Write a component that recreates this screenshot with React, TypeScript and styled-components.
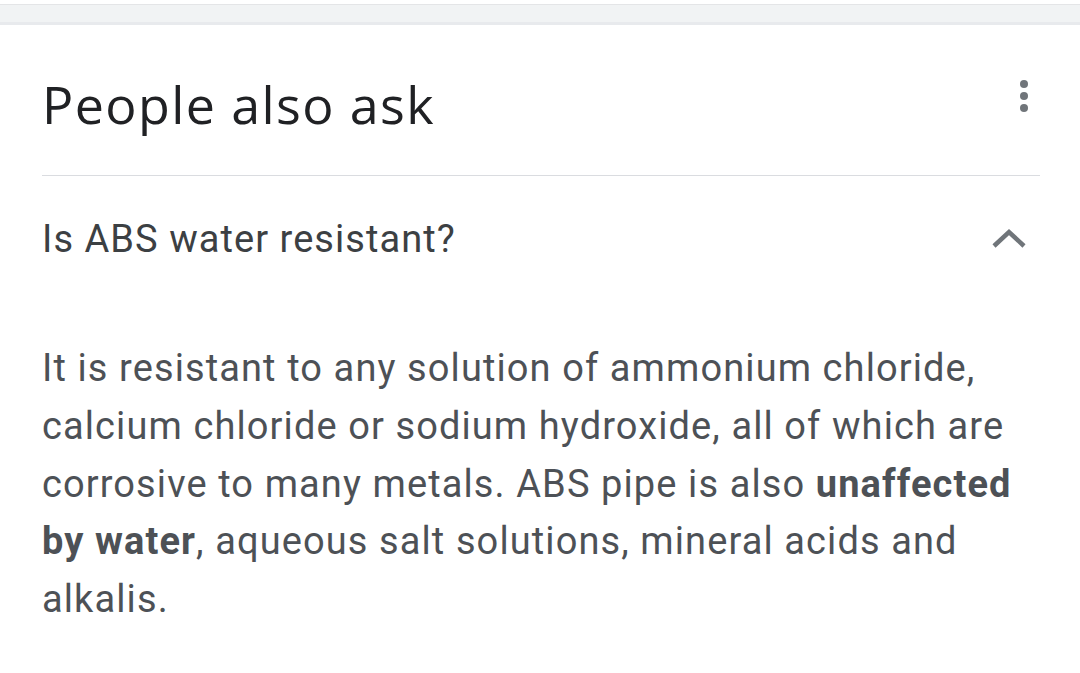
import React from "react";
import styled, { createGlobalStyle } from "styled-components";

const Global = createGlobalStyle`
  html, body { margin: 0; padding: 0; background: #ffffff; }
  body { font-family: Roboto, "Liberation Sans", Arial, sans-serif; }
`;

const Page = styled.div`
  width: 1080px;
  min-height: 673px;
  background: #ffffff;
  overflow: hidden;
`;

const TopBand = styled.div`
  margin-top: 4px;
  height: 17px;
  background: #f1f3f4;
  border-top: 1px solid #e4e5e7;
  border-bottom: 3px solid #e8eaed;
`;

const Card = styled.section`
  padding: 0 40px 0 42px;
`;

const Header = styled.div`
  display: flex;
  align-items: flex-start;
  justify-content: space-between;
  padding: 49px 0 41px;
  border-bottom: 1px solid #dadce0;
`;

const Heading = styled.h2`
  margin: 0;
  font-family: "Open Sans", Roboto, sans-serif;
  font-weight: 400;
  font-size: 52px;
  line-height: 60px;
  color: #202124;
  letter-spacing: 1.4px;
`;

const MenuButton = styled.div`
  display: flex;
  flex-direction: column;
  align-items: center;
  gap: 4px;
  margin-top: 6px;
  margin-right: 12px;
`;

const Dot = styled.span`
  width: 8px;
  height: 8px;
  border-radius: 50%;
  background: #70757a;
`;

const QuestionRow = styled.div`
  display: flex;
  align-items: center;
  justify-content: space-between;
  padding-top: 34px;
`;

const Question = styled.div`
  font-size: 38px;
  line-height: 58px;
  letter-spacing: 1.05px;
  color: #3c4043;
`;

const Chevron = styled.svg`
  width: 36px;
  height: 24px;
  margin-right: 13px;
`;

const Answer = styled.p`
  margin: 72px 0 0;
  font-size: 38px;
  line-height: 57.75px;
  letter-spacing: 1.1px;
  color: #4d5156;
  b { font-weight: 700; color: #4d5156; }
`;

export default function App() {
  return (
    <Page>
      <Global />
      <TopBand />
      <Card>
        <Header>
          <Heading>People also ask</Heading>
          <MenuButton>
            <Dot />
            <Dot />
            <Dot />
          </MenuButton>
        </Header>
        <QuestionRow>
          <Question>Is ABS water resistant?</Question>
          <Chevron viewBox="0 0 36 24">
            <path d="M3 19 L18 5 L33 19" fill="none" stroke="#70757a" strokeWidth="4.5" />
          </Chevron>
        </QuestionRow>
        <Answer>
          It is resistant to any solution of ammonium chloride, calcium chloride or sodium
          hydroxide, all of which are corrosive to many metals. ABS pipe is also{" "}
          <b>unaffected by water</b>, aqueous salt solutions, mineral acids and alkalis.
        </Answer>
      </Card>
    </Page>
  );
}
